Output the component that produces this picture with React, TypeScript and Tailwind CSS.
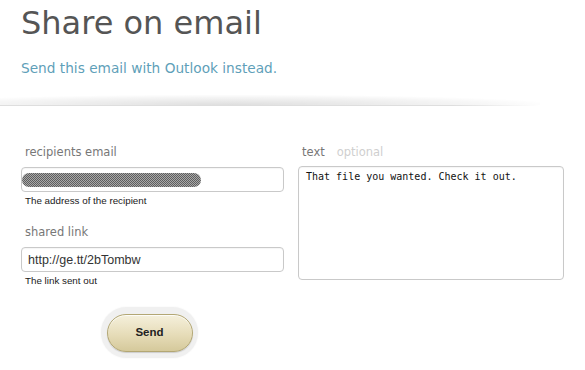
import React from 'react'

const sans = { fontFamily: '"DejaVu Sans", Verdana, sans-serif' }

function Field({ label, help, children }: { label: string; help: string; children: React.ReactNode }) {
  return (
    <div className="flex flex-col">
      <label className="ml-[4px] mb-[8px] text-[11.5px] leading-[14px] text-[#777]">{label}</label>
      {children}
      <p className="ml-[4px] mt-[3px] text-[9.8px] leading-[12px] text-[#1a1a1a] font-['Liberation_Sans',Arial,sans-serif]">
        {help}
      </p>
    </div>
  )
}

export default function App() {
  return (
    <div className="w-[585px] h-[370px] overflow-hidden bg-white" style={sans}>
      <div className="px-[21px]">
        <h1 className="mt-[4px] text-[32px] leading-[38px] text-[#555] font-normal">Share on email</h1>
        <a href="#" className="block mt-[18px] text-[13.7px] leading-[16px] text-[#5f9fb9]">
          Send this email with Outlook instead.
        </a>
      </div>

      {/* shadowed divider */}
      <div className="relative mt-[19px] h-[11px] overflow-hidden">
        <div className="absolute -left-[80px] w-[620px] top-0 h-[10px] bg-[radial-gradient(ellipse_at_bottom,rgba(0,0,0,0.13),rgba(0,0,0,0.04)_55%,transparent_75%)]" />
        <div className="absolute -left-[40px] w-[580px] bottom-0 h-px bg-[linear-gradient(to_right,#dedede_85%,transparent)]" />
      </div>

      <div className="mt-[39px] px-[21px] grid grid-cols-[263px_266px] gap-[14px]">
        <div className="flex flex-col">
          <Field label="recipients email" help="The address of the recipient">
            <div className="h-[25px] rounded-[4px] border border-[#c9c9c9] bg-white flex items-center shadow-[inset_0_1px_1px_rgba(0,0,0,0.04)]">
              <div className="w-[179px] h-[14px] rounded-full bg-[repeating-conic-gradient(#5e5e5e_0_25%,#a8a8a8_0_50%)] bg-[length:2px_2px]" />
            </div>
          </Field>
          <div className="mt-[18px]">
            <Field label="shared link" help="The link sent out">
              <input
                readOnly
                defaultValue="http://ge.tt/2bTombw"
                className="h-[25px] rounded-[4px] border border-[#c9c9c9] bg-white px-[6px] text-[12.5px] text-[#333] outline-none font-['Liberation_Sans',Arial,sans-serif] shadow-[inset_0_1px_1px_rgba(0,0,0,0.04)]"
              />
            </Field>
          </div>
          <div className="mt-[20px] ml-[80px] w-[97px] h-[51px] rounded-full bg-[#f0f0f0] flex items-center justify-center shadow-[0_0_2px_rgba(0,0,0,0.06)]">
            <button className="w-[86px] h-[38px] rounded-full border border-[#b3a774] bg-[linear-gradient(to_bottom,#f5f0dc,#e6dcb8_55%,#d5c99b)] shadow-[inset_0_1px_0_rgba(255,255,255,0.8),0_1px_1px_rgba(0,0,0,0.15)] text-[11.5px] font-bold text-[#222] font-['Liberation_Sans',Arial,sans-serif]">
              Send
            </button>
          </div>
        </div>

        <div className="flex flex-col">
          <div className="ml-[4px] mb-[7px] text-[11.5px] leading-[14px]">
            <span className="text-[#777]">text</span>
            <span className="ml-[12px] text-[#cfcfcf]">optional</span>
          </div>
          <textarea
            readOnly
            defaultValue="That file you wanted. Check it out."
            className="h-[114px] resize-none rounded-[4px] border border-[#c9c9c9] bg-white px-[7px] pt-[3px] text-[10px] leading-[13px] text-[#111] outline-none font-['DejaVu_Sans_Mono',monospace] shadow-[inset_0_1px_1px_rgba(0,0,0,0.04)]"
          />
        </div>
      </div>
    </div>
  )
}
